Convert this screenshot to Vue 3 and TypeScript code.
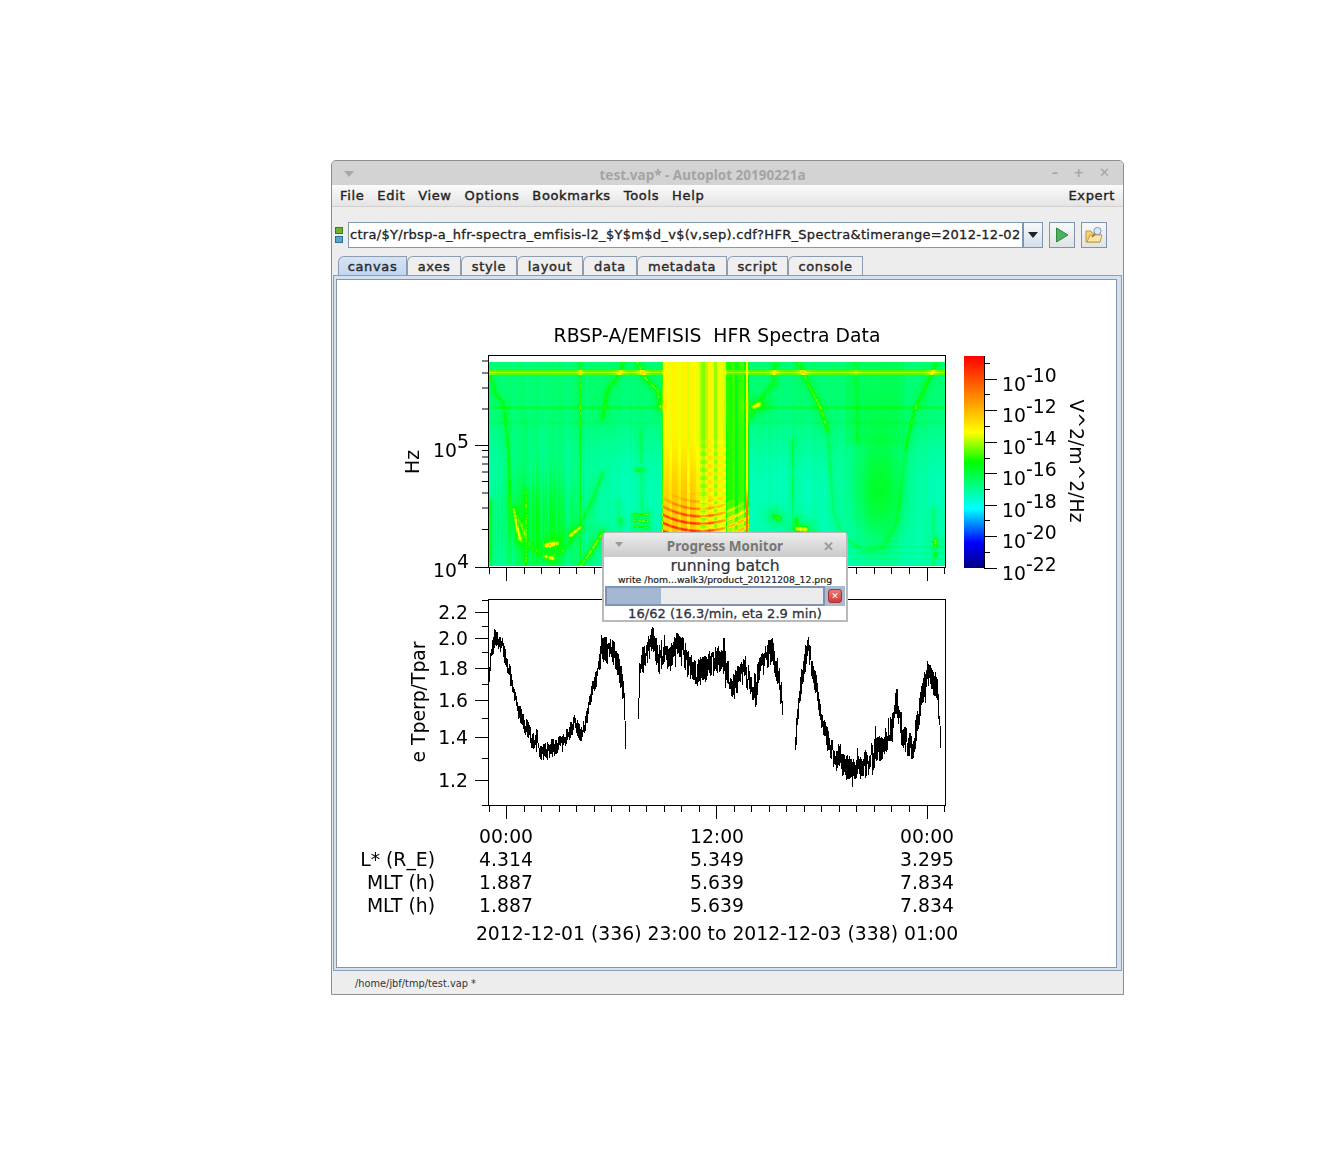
<script setup lang="ts">
import { onMounted, ref } from 'vue';

type Pt = [number, number];

const menus = ['File', 'Edit', 'View', 'Options', 'Bookmarks', 'Tools', 'Help'];
const tabs = [
  { label: 'canvas', width: 69 },
  { label: 'axes', width: 54 },
  { label: 'style', width: 56 },
  { label: 'layout', width: 66 },
  { label: 'data', width: 54 },
  { label: 'metadata', width: 90 },
  { label: 'script', width: 61 },
  { label: 'console', width: 75 },
];
const url = 'ctra/$Y/rbsp-a_hfr-spectra_emfisis-l2_$Y$m$d_v$(v,sep).cdf?HFR_Spectra&timerange=2012-12-02';

const SPEC_X = 489;
const SPEC_Y = 362;
const SPEC_W = 456;
const SPEC_H = 204;

function rng(seed: number) {
  let s = seed;
  return () => {
    s = (s + 0x6d2b79f5) | 0;
    let t = Math.imul(s ^ (s >>> 15), 1 | s);
    t = (t + Math.imul(t ^ (t >>> 7), 61 | t)) ^ t;
    return ((t ^ (t >>> 14)) >>> 0) / 4294967296;
  };
}

// axis ticks, all in page pixels (the svg viewBox starts at the panel corner)
const xTicks = Array.from({ length: 27 }, (_, i) => ({ x: 489 + i * 17.52, major: (i - 1) % 12 === 0 }));
const hzMinor = [361, 373, 388, 409, 450.5, 457, 464, 472, 481.5, 493, 508, 529.5];
const ratioMajor = [612, 638, 668, 700, 737, 780];
const ratioMinor = [600, 626, 652, 684, 718, 758, 805];
const ratioLabels = ['2.2', '2.0', '1.8', '1.6', '1.4', '1.2'];
const barMajor = [379, 410, 442, 473, 505, 536, 568];
const barMinor = [363, 394, 426, 458, 489, 520, 552];
const barExp = ['-10', '-12', '-14', '-16', '-18', '-20', '-22'];
const tableRows = [
  { label: 'L* (R_E)', values: ['4.314', '5.349', '3.295'], y: 866 },
  { label: 'MLT (h)', values: ['1.887', '5.639', '7.834'], y: 889 },
  { label: 'MLT (h)', values: ['1.887', '5.639', '7.834'], y: 912 },
];
const tableX = [506, 717, 927];
const tableTimes = ['00:00', '12:00', '00:00'];

const barStops: [number, string][] = [
  [0, '#000080'], [0.12, '#0000ff'], [0.28, '#00ffff'], [0.5, '#00ff00'],
  [0.64, '#ffff00'], [0.82, '#ff8000'], [1, '#ff0000'],
];

// e Tperp/Tpar trace: centre line of the noisy band, split where the data has gaps
const traceParts: Pt[][] = [
  [[489, 680], [491, 660], [495, 638], [503, 650], [510, 675], [518, 708], [525, 728], [530, 735], [543, 752], [557, 748], [567, 735], [575, 725], [581, 735], [587, 718], [592, 692], [597, 678], [602, 645], [613, 652], [620, 672], [624, 695], [626, 752]],
  [[638, 723], [640, 662], [647, 652], [653, 635], [658, 662], [665, 650], [670, 665], [677, 642], [690, 665], [697, 675], [708, 668], [722, 658], [733, 688], [745, 668], [752, 695], [760, 665], [772, 645], [780, 682], [783, 715]],
  [[795, 750], [800, 695], [808, 645], [815, 680], [823, 725], [833, 755], [850, 772], [860, 768], [877, 752], [890, 732], [897, 702], [903, 738], [913, 748], [920, 708], [927, 675], [937, 688], [941, 745]],
];

function traceAmp(x: number): number {
  if (x < 600) return 9;
  if (x < 790) return 14;
  if (x < 830) return 12;
  return 14;
}

function buildTrace(): string {
  const r = rng(42);
  let d = '';
  for (const part of traceParts) {
    let seg = 0;
    let first = true;
    let wander = 0;
    const last = part[part.length - 1][0];
    for (let x = part[0][0]; x <= last; x += 0.25) {
      while (seg < part.length - 2 && x > part[seg + 1][0]) seg++;
      const [x0, y0] = part[seg];
      const [x1, y1] = part[seg + 1];
      const c = y0 + ((y1 - y0) * (x - x0)) / (x1 - x0);
      wander = wander * 0.97 + (r() - 0.5) * 1.6;
      const amp = traceAmp(x);
      const spike = r() < 0.03 ? 2 : 1;
      // the band pinches to a thin line at the ends of each data segment
      const edge = Math.min(1, (Math.min(x - part[0][0], last - x) + 1) / 3);
      const y = c + wander * edge + (r() - 0.5) * 2 * amp * spike * edge;
      d += `${first ? 'M' : 'L'}${x.toFixed(2)} ${y.toFixed(1)}`;
      first = false;
    }
  }
  return d;
}
const tracePath = buildTrace();

const specCanvas = ref<HTMLCanvasElement | null>(null);

function ramp(t: number): [number, number, number] {
  const hex = (s: string): number[] => [1, 3, 5].map((i) => parseInt(s.slice(i, i + 2), 16));
  const v = Math.max(0, Math.min(1, t));
  for (let i = 1; i < barStops.length; i++) {
    if (v <= barStops[i][0]) {
      const [a, ca] = barStops[i - 1];
      const [b, cb] = barStops[i];
      const f = (v - a) / (b - a);
      const p = hex(ca);
      const q = hex(cb);
      return [p[0] + (q[0] - p[0]) * f, p[1] + (q[1] - p[1]) * f, p[2] + (q[2] - p[2]) * f];
    }
  }
  return [255, 0, 0];
}

function smooth(v: number): number {
  const c = Math.max(0, Math.min(1, v));
  return c * c * (3 - 2 * c);
}

function drawSpectrogram(ctx: CanvasRenderingContext2D) {
  const r = rng(7);
  const extra = new Float32Array(SPEC_W * SPEC_H);
  const colNoise = Array.from({ length: SPEC_W }, () => r());
  const stripe: number[] = [];
  for (let i = 0; i < SPEC_W; i++) stripe.push(i % 3 === 0 ? r() : stripe[i - 1]);

  const stamp = (px: number, py: number, rad: number, amp: number) => {
    const cx = px - SPEC_X;
    const cy = py - SPEC_Y;
    const R = Math.ceil(rad * 2.5);
    for (let y = Math.floor(cy) - R; y <= cy + R; y++) {
      for (let x = Math.floor(cx) - R; x <= cx + R; x++) {
        if (x < 0 || y < 0 || x >= SPEC_W || y >= SPEC_H) continue;
        const g = amp * Math.exp(-((x - cx) ** 2 + (y - cy) ** 2) / (2 * rad * rad));
        const i = y * SPEC_W + x;
        if (g > extra[i]) extra[i] = g;
      }
    }
  };
  const curve = (pts: Pt[], rad: number, amp: number) => {
    for (let i = 0; i < pts.length - 1; i++) {
      const [x0, y0] = pts[i];
      const [x1, y1] = pts[i + 1];
      const n = Math.ceil(Math.hypot(x1 - x0, y1 - y0));
      for (let k = 0; k <= n; k++) {
        const f = k / n;
        const px = x0 + (x1 - x0) * f;
        const py = y0 + (y1 - y0) * f;
        stamp(px, py, rad, amp * (0.55 + 0.7 * r()));
        stamp(px, py, rad * 3, amp * 0.3);
      }
    }
  };

  // plasmapause-like curves
  curve([[490, 377], [495, 393], [503, 403], [508, 450], [510, 507], [520, 523], [530, 547], [540, 552], [550, 557], [563, 550], [577, 530], [593, 497], [602, 473]], 1.3, 0.1);
  curve([[602, 417], [607, 390], [620, 372], [623, 362]], 1.3, 0.11);
  curve([[637, 362], [645, 378], [657, 390], [660, 407]], 1.3, 0.15);
  curve([[580, 566], [593, 547], [602, 532]], 1.6, 0.2);
  curve([[750, 417], [757, 403], [773, 383], [775, 362]], 1.3, 0.12);
  curve([[798, 362], [810, 388], [820, 407], [827, 430]], 1.3, 0.15);
  curve([[827, 430], [833, 513], [843, 537], [863, 550], [883, 547], [897, 520], [905, 450]], 1.4, 0.06);
  curve([[905, 450], [913, 413], [923, 390], [933, 370], [936, 362]], 1.3, 0.11);
  curve([[855, 362], [857, 440]], 1.3, 0.04);
  curve([[792, 440], [792, 517]], 1.3, 0.08);
  curve([[933, 510], [933, 566]], 1.4, 0.07);
  curve([[640, 430], [642, 520]], 1.3, 0.06);
  curve([[618, 500], [620, 566]], 1.3, 0.05);
  // bright spots
  curve([[513, 508], [516, 525], [520, 540]], 1.4, 0.2);
  curve([[546, 545], [556, 543]], 1.8, 0.24);
  curve([[545, 556], [552, 558]], 1.6, 0.2);
  curve([[570, 535], [580, 527]], 1.6, 0.22);
  curve([[634, 515], [647, 514]], 1.1, 0.22);
  curve([[634, 520], [647, 521]], 1.1, 0.24);
  curve([[634, 526], [647, 527]], 1.1, 0.2);
  curve([[637, 470], [642, 470]], 1.2, 0.16);
  curve([[620, 519], [620, 523]], 1.6, 0.12);
  curve([[753, 406], [760, 403]], 2.2, 0.22);
  curve([[774, 516], [778, 518]], 2.2, 0.22);
  curve([[795, 528], [805, 529]], 2.4, 0.26);
  curve([[796, 518], [796, 524]], 2, 0.14);
  curve([[935, 540], [935, 546]], 1.6, 0.2);
  curve([[935, 553], [935, 556]], 1.4, 0.14);
  curve([[490, 500], [490, 566]], 1, 0.12);
  curve([[526, 490], [526, 566]], 0.9, 0.14);
  curve([[526, 420], [526, 490]], 1.2, 0.03);
  curve([[580, 362], [580, 566]], 0.7, 0.13);

  const img = ctx.createImageData(SPEC_W, SPEC_H);
  for (let y = 0; y < SPEC_H; y++) {
    const py = y + SPEC_Y;
    for (let x = 0; x < SPEC_W; x++) {
      const px = x + SPEC_X;
      let t = 0.4 - 0.055 * smooth((py - 395) / 90);
      t += (colNoise[x] - 0.5) * 0.018;

      // greener basins at both low-L passes
      const d1 = ((px - 538) / 42) ** 2 + ((py - 525) / 62) ** 2;
      t += 0.11 * Math.exp(-d1) * (0.7 + 0.6 * colNoise[x]);
      const d2 = ((px - 878) / 27) ** 2 + ((py - 490) / 55) ** 2;
      t += 0.12 * Math.exp(-d2);
      if (px > 845 && px < 905 && py < 445) t += 0.02;

      // receiver lines
      if (py >= 370 && py <= 374) t = Math.max(t, py === 372 ? 0.59 : 0.54);
      if (py >= 406 && py <= 408) t += 0.04;
      if (py >= 421 && py <= 423) t += 0.025;
      if (py > 540 && px > 840 && py % 6 < 2) t += 0.02;

      // the broad band near noon
      const rad = Math.hypot(px - 700, py - 440);
      const rings = Math.max(0, Math.sin(rad * 0.85));
      if (px >= 661 && px < 727) {
        const fade = smooth((px - 661) / 2) * (1 - smooth((px - 725) / 2));
        const dash = (py >> 2) % 2 === 0 ? 0.03 : 0;
        let band: number;
        if (px < 700) {
          band = 0.63 + (stripe[x] - 0.5) * 0.06 + 0.05 * smooth((py - 430) / 80) * (0.5 + stripe[x]);
        } else {
          band = 0.6 + (stripe[x] - 0.5) * 0.12 + dash * smooth((py - 430) / 30);
        }
        const low = smooth((py - 488) / 36);
        band += 0.22 * low * rings * (px > 716 ? 0.6 : 1);
        t = t * (1 - fade) + band * fade;
      } else if (px >= 727 && px < 749) {
        t = Math.max(t, 0.47 + stripe[x] * 0.07 + 0.07 * smooth((py - 495) / 30));
        if (py > 490) t += 0.15 * rings * smooth((py - 495) / 30);
        if (px >= 746 && px <= 747) t = 0.64 + smooth((py - 480) / 30) * 0.2;
      }

      t += extra[y * SPEC_W + x];
      const [rr, gg, bb] = ramp(t);
      const i = (y * SPEC_W + x) * 4;
      img.data[i] = rr;
      img.data[i + 1] = gg;
      img.data[i + 2] = bb;
      img.data[i + 3] = 255;
    }
  }
  ctx.putImageData(img, 0, 0);
}

onMounted(() => {
  const ctx = specCanvas.value?.getContext('2d');
  if (ctx) drawSpectrogram(ctx);
});
</script>

<template>
  <div class="page">
    <div class="window">
      <div class="titlebar">
        <span class="titlebar__arrow"></span>
        <span class="titlebar__title">test.vap* - Autoplot 20190221a</span>
        <span class="titlebar__buttons"><i>–</i><i>+</i><i>✕</i></span>
      </div>

      <div class="menubar">
        <span v-for="m in menus" :key="m" class="menubar__item">{{ m }}</span>
        <span class="menubar__expert">Expert</span>
      </div>

      <div class="toolbar">
        <div class="leds"><span class="led led--green"></span><span class="led led--blue"></span></div>
        <div class="url">{{ url }}</div>
        <button class="combo"><span class="combo__arrow"></span></button>
        <button class="tool">
          <svg width="16" height="16" viewBox="0 0 16 16">
            <path d="M2.5 1 14 8 2.5 15Z" fill="#4eb05a" stroke="#2f8a3e" />
          </svg>
        </button>
        <button class="tool">
          <svg width="20" height="20" viewBox="0 0 20 20">
            <path d="M2 6h5l1 2h8v9H2Z" fill="#f3d377" stroke="#c49a3a" />
            <path d="M3 17 6 10h12l-2 7Z" fill="#fbe7a6" stroke="#c49a3a" />
            <circle cx="13.5" cy="6" r="3.6" fill="#dbe9f7" stroke="#7e9cc0" />
            <path d="m11 9-3 3" stroke="#c45a3a" stroke-width="1.6" />
          </svg>
        </button>
      </div>

      <div class="tabs">
        <div
          v-for="(t, i) in tabs"
          :key="t.label"
          class="tab"
          :class="{ 'tab--active': i === 0 }"
          :style="{ width: t.width + 'px' }"
        >
          {{ t.label }}
        </div>
      </div>

      <div class="panel">
        <div class="plot">
          <canvas ref="specCanvas" class="plot__spec" :width="SPEC_W" :height="SPEC_H"></canvas>
          <svg class="plot__svg" width="779" height="687" viewBox="337 280 779 687">
            <defs>
              <linearGradient id="bar" x1="0" y1="1" x2="0" y2="0">
                <stop v-for="s in barStops" :key="s[0]" :offset="s[0]" :stop-color="s[1]" />
              </linearGradient>
            </defs>

            <text class="lbl" x="717" y="342" text-anchor="middle">RBSP-A/EMFISIS&#160; HFR Spectra Data</text>

            <!-- spectrogram axes -->
            <rect class="axis" x="488.5" y="355.5" width="457" height="212" />
            <path class="axis" d="M475 445.5H488M475 567.5H488" />
            <path v-for="y in hzMinor" :key="y" class="axis" :d="`M482 ${y}H488`" />
            <path
              v-for="t in xTicks"
              :key="'s' + t.x"
              class="axis"
              :d="`M${Math.floor(t.x) + 0.5} 567V${t.major ? 581 : 574}`"
            />
            <text class="lbl" x="457" y="457" text-anchor="end">10</text>
            <text class="lbl" x="457" y="448">5</text>
            <text class="lbl" x="457" y="577" text-anchor="end">10</text>
            <text class="lbl" x="457" y="568">4</text>
            <text class="lbl" transform="translate(419 462) rotate(-90)" text-anchor="middle">Hz</text>

            <!-- colour bar -->
            <rect x="964" y="356" width="20" height="212" fill="url(#bar)" />
            <path class="axis" d="M984.5 356V568" />
            <path v-for="y in barMajor" :key="y" class="axis" :d="`M984 ${y + 0.5}H997`" />
            <path v-for="y in barMinor" :key="y" class="axis" :d="`M984 ${y + 0.5}H990`" />
            <template v-for="(e, i) in barExp" :key="e">
              <text class="lbl" x="1002" :y="barMajor[i] + 12">10</text>
              <text class="lbl" x="1026" :y="barMajor[i] + 3">{{ e }}</text>
            </template>
            <text class="lbl" transform="translate(1070 461) rotate(90)" text-anchor="middle">V^2/m^2/Hz</text>

            <!-- e Tperp/Tpar panel -->
            <path class="trace" shape-rendering="crispEdges" :d="tracePath" />
            <rect class="axis" x="488.5" y="599.5" width="457" height="206" />
            <path v-for="y in ratioMajor" :key="y" class="axis" :d="`M475 ${y + 0.5}H488`" />
            <path v-for="y in ratioMinor" :key="y" class="axis" :d="`M482 ${y + 0.5}H488`" />
            <text v-for="(l, i) in ratioLabels" :key="l" class="lbl" x="468" :y="ratioMajor[i] + 7" text-anchor="end">{{ l }}</text>
            <text class="lbl" transform="translate(425 702) rotate(-90)" text-anchor="middle">e Tperp/Tpar</text>
            <path
              v-for="t in xTicks"
              :key="'r' + t.x"
              class="axis"
              :d="`M${Math.floor(t.x) + 0.5} 805V${t.major ? 819 : 812}`"
            />

            <!-- ephemeris table -->
            <text v-for="(x, i) in tableX" :key="x" class="lbl" :x="x" y="843" text-anchor="middle">{{ tableTimes[i] }}</text>
            <template v-for="row in tableRows" :key="row.y">
              <text class="lbl" x="435" :y="row.y" text-anchor="end">{{ row.label }}</text>
              <text v-for="(v, i) in row.values" :key="i" class="lbl" :x="tableX[i]" :y="row.y" text-anchor="middle">{{ v }}</text>
            </template>
            <text class="lbl" x="717" y="940" text-anchor="middle">2012-12-01 (336) 23:00 to 2012-12-03 (338) 01:00</text>
          </svg>
        </div>
      </div>

      <div class="status">/home/jbf/tmp/test.vap *</div>

      <div class="monitor">
        <div class="monitor__title">
          <span class="monitor__arrow"></span>
          <span>Progress Monitor</span>
          <span class="monitor__close">✕</span>
        </div>
        <div class="monitor__body">
          <div class="monitor__task">running batch</div>
          <div class="monitor__file">write /hom...walk3/product_20121208_12.png</div>
          <div class="monitor__row">
            <div class="monitor__bar"><div class="monitor__fill" :style="{ width: (16 / 64) * 100 + '%' }"></div></div>
            <div class="monitor__cancel"><span>✕</span></div>
          </div>
          <div class="monitor__count">16/62 (16.3/min, eta 2.9 min)</div>
        </div>
      </div>
    </div>
  </div>
</template>

<style scoped>
.page {
  box-sizing: border-box;
  width: 1318px;
  height: 1156px;
  padding: 160px 0 0 331px;
  background: #fff;
  font-family: 'DejaVu Sans', sans-serif;
}

.window {
  position: relative;
  box-sizing: border-box;
  width: 793px;
  height: 835px;
  display: flex;
  flex-direction: column;
  border: 1px solid #8e8e8e;
  border-radius: 5px 5px 0 0;
  background: #ededed;
}

.titlebar {
  height: 24px;
  flex-shrink: 0;
  box-sizing: border-box;
  padding: 3px 50px 0 0;
  display: flex;
  align-items: center;
  justify-content: center;
  position: relative;
  background: #d3d3d3;
  border-radius: 4px 4px 0 0;
  color: #a4a4a4;
  font-family: 'Noto Sans', sans-serif;
  font-size: 13.5px;
  font-weight: 700;
}

.titlebar__arrow {
  position: absolute;
  left: 12px;
  top: 10px;
  border: 5px solid transparent;
  border-top: 6px solid #a8a8a8;
  border-bottom: 0;
}

.titlebar__buttons {
  position: absolute;
  right: 13px;
  top: 4px;
  display: flex;
  gap: 15px;
  font-family: 'DejaVu Sans', sans-serif;
  font-size: 13px;
}

.titlebar__buttons i {
  font-style: normal;
}

.menubar {
  height: 21px;
  flex-shrink: 0;
  display: flex;
  align-items: center;
  gap: 13px;
  padding: 0 8px;
  background: linear-gradient(#fbfbfb, #e4e4e4);
  border-bottom: 1px solid #d0d0d0;
  color: #232323;
  font-size: 13px;
  letter-spacing: 0.65px;
  -webkit-text-stroke: 0.4px #232323;
}

.menubar__expert {
  margin-left: auto;
}

.toolbar {
  height: 49px;
  flex-shrink: 0;
  box-sizing: border-box;
  display: flex;
  align-items: center;
  padding: 7px 0 0 3px;
}

.leds {
  display: flex;
  flex-direction: column;
  gap: 2px;
  margin-right: 5px;
}

.led {
  width: 6px;
  height: 5px;
  border: 1px solid;
}

.led--green { background: #6cb22e; border-color: #3f7d14; }
.led--blue { background: #5aa3cf; border-color: #2f6f98; }

.url {
  box-sizing: border-box;
  width: 675px;
  height: 26px;
  line-height: 24px;
  padding-left: 1px;
  border: 1px solid #8297b0;
  background: #fff;
  overflow: hidden;
  white-space: nowrap;
  color: #222;
  font-size: 13px;
  letter-spacing: 0.3px;
  -webkit-text-stroke: 0.3px #222;
}

.combo,
.tool {
  box-sizing: border-box;
  height: 26px;
  padding: 0;
  display: flex;
  align-items: center;
  justify-content: center;
  border: 1px solid #7f93ac;
  background: linear-gradient(#f7f9fb, #d3dfec);
}

.combo {
  width: 20px;
  margin-right: 6px;
}

.combo__arrow {
  border: 5px solid transparent;
  border-top: 6px solid #222;
  border-bottom: 0;
}

.tool {
  width: 26px;
  margin-right: 6px;
  background: linear-gradient(#f8f8f8, #dfe3e8);
}

.tabs {
  height: 19px;
  flex-shrink: 0;
  display: flex;
  padding-left: 6px;
}

.tab {
  box-sizing: border-box;
  height: 19px;
  padding-top: 2px;
  text-align: center;
  border: 1px solid #8d9cb0;
  border-width: 1px 1px 0 1px;
  border-radius: 6px 0 0 0;
  color: #2b2b2b;
  font-size: 13px;
  letter-spacing: 0.65px;
  -webkit-text-stroke: 0.4px #2b2b2b;
  background: #efefef;
}

.tab--active {
  background: linear-gradient(#d6e3f4, #c2d7ef);
  color: #1f2a38;
}

.panel {
  flex: 1;
  min-height: 0;
  margin: 0 1px;
  padding: 4px 3px 2px;
  border: 1px solid #8d9cb0;
  background: #d4e1f2;
}

.plot {
  position: relative;
  width: 779px;
  height: 687px;
  outline: 1px solid #8a94a2;
  background: #fff;
}

.plot__spec {
  position: absolute;
  left: 152px;
  top: 82px;
}

.plot__svg {
  position: absolute;
  left: 0;
  top: 0;
}

.lbl {
  fill: #000;
  font-size: 18.8px;
}

.axis {
  fill: none;
  stroke: #000;
  stroke-width: 1;
}

.trace {
  fill: none;
  stroke: #000;
  stroke-width: 1;
}

.status {
  height: 23px;
  flex-shrink: 0;
  padding-left: 23px;
  line-height: 26px;
  color: #333;
  font-size: 9.8px;
}

.monitor {
  position: absolute;
  left: 270px;
  top: 371px;
  box-sizing: border-box;
  width: 246px;
  height: 90px;
  border: 2px solid #b9b9b9;
  border-top-width: 1px;
  border-radius: 5px 5px 0 0;
  background: #fff;
  color: #2c3340;
}

.monitor__title {
  height: 24px;
  box-sizing: border-box;
  padding-top: 2px;
  display: flex;
  align-items: center;
  justify-content: center;
  position: relative;
  background: linear-gradient(#ececec, #cbcbcb);
  color: #777;
  font-family: 'Noto Sans', sans-serif;
  font-size: 13.5px;
  font-weight: 700;
}

.monitor__arrow {
  position: absolute;
  left: 11px;
  top: 9px;
  border: 4px solid transparent;
  border-top: 5px solid #9a9a9a;
  border-bottom: 0;
}

.monitor__close {
  position: absolute;
  right: 12px;
  top: 4px;
  color: #9a9a9a;
  font-size: 13px;
}

.monitor__body {
  text-align: center;
}

.monitor__task {
  height: 17px;
  line-height: 18px;
  font-size: 15.6px;
  -webkit-text-stroke: 0.2px #2c3340;
}

.monitor__file {
  height: 11px;
  line-height: 12px;
  font-size: 9.3px;
  white-space: nowrap;
  color: #222;
  -webkit-text-stroke: 0.2px #222;
}

.monitor__row {
  display: flex;
  height: 20px;
  padding: 0 1px;
  margin-top: 1px;
}

.monitor__bar {
  box-sizing: border-box;
  width: 220px;
  border: 2px solid #7f94b4;
  background: #ebebeb;
}

.monitor__fill {
  height: 100%;
  background: #a3b7d0;
}

.monitor__cancel {
  flex: 1;
  display: flex;
  align-items: center;
  justify-content: center;
  background: #a9bbd2;
}

.monitor__cancel span {
  width: 14px;
  height: 14px;
  border-radius: 3px;
  background: linear-gradient(#ee7a7a, #cf3a3a);
  border: 1px solid #a83232;
  box-sizing: border-box;
  color: #fff;
  font-size: 9px;
  font-weight: 700;
  line-height: 12px;
}

.monitor__count {
  height: 15px;
  line-height: 16px;
  font-size: 13px;
  letter-spacing: 0.05px;
  -webkit-text-stroke: 0.3px #2c3340;
}
</style>
